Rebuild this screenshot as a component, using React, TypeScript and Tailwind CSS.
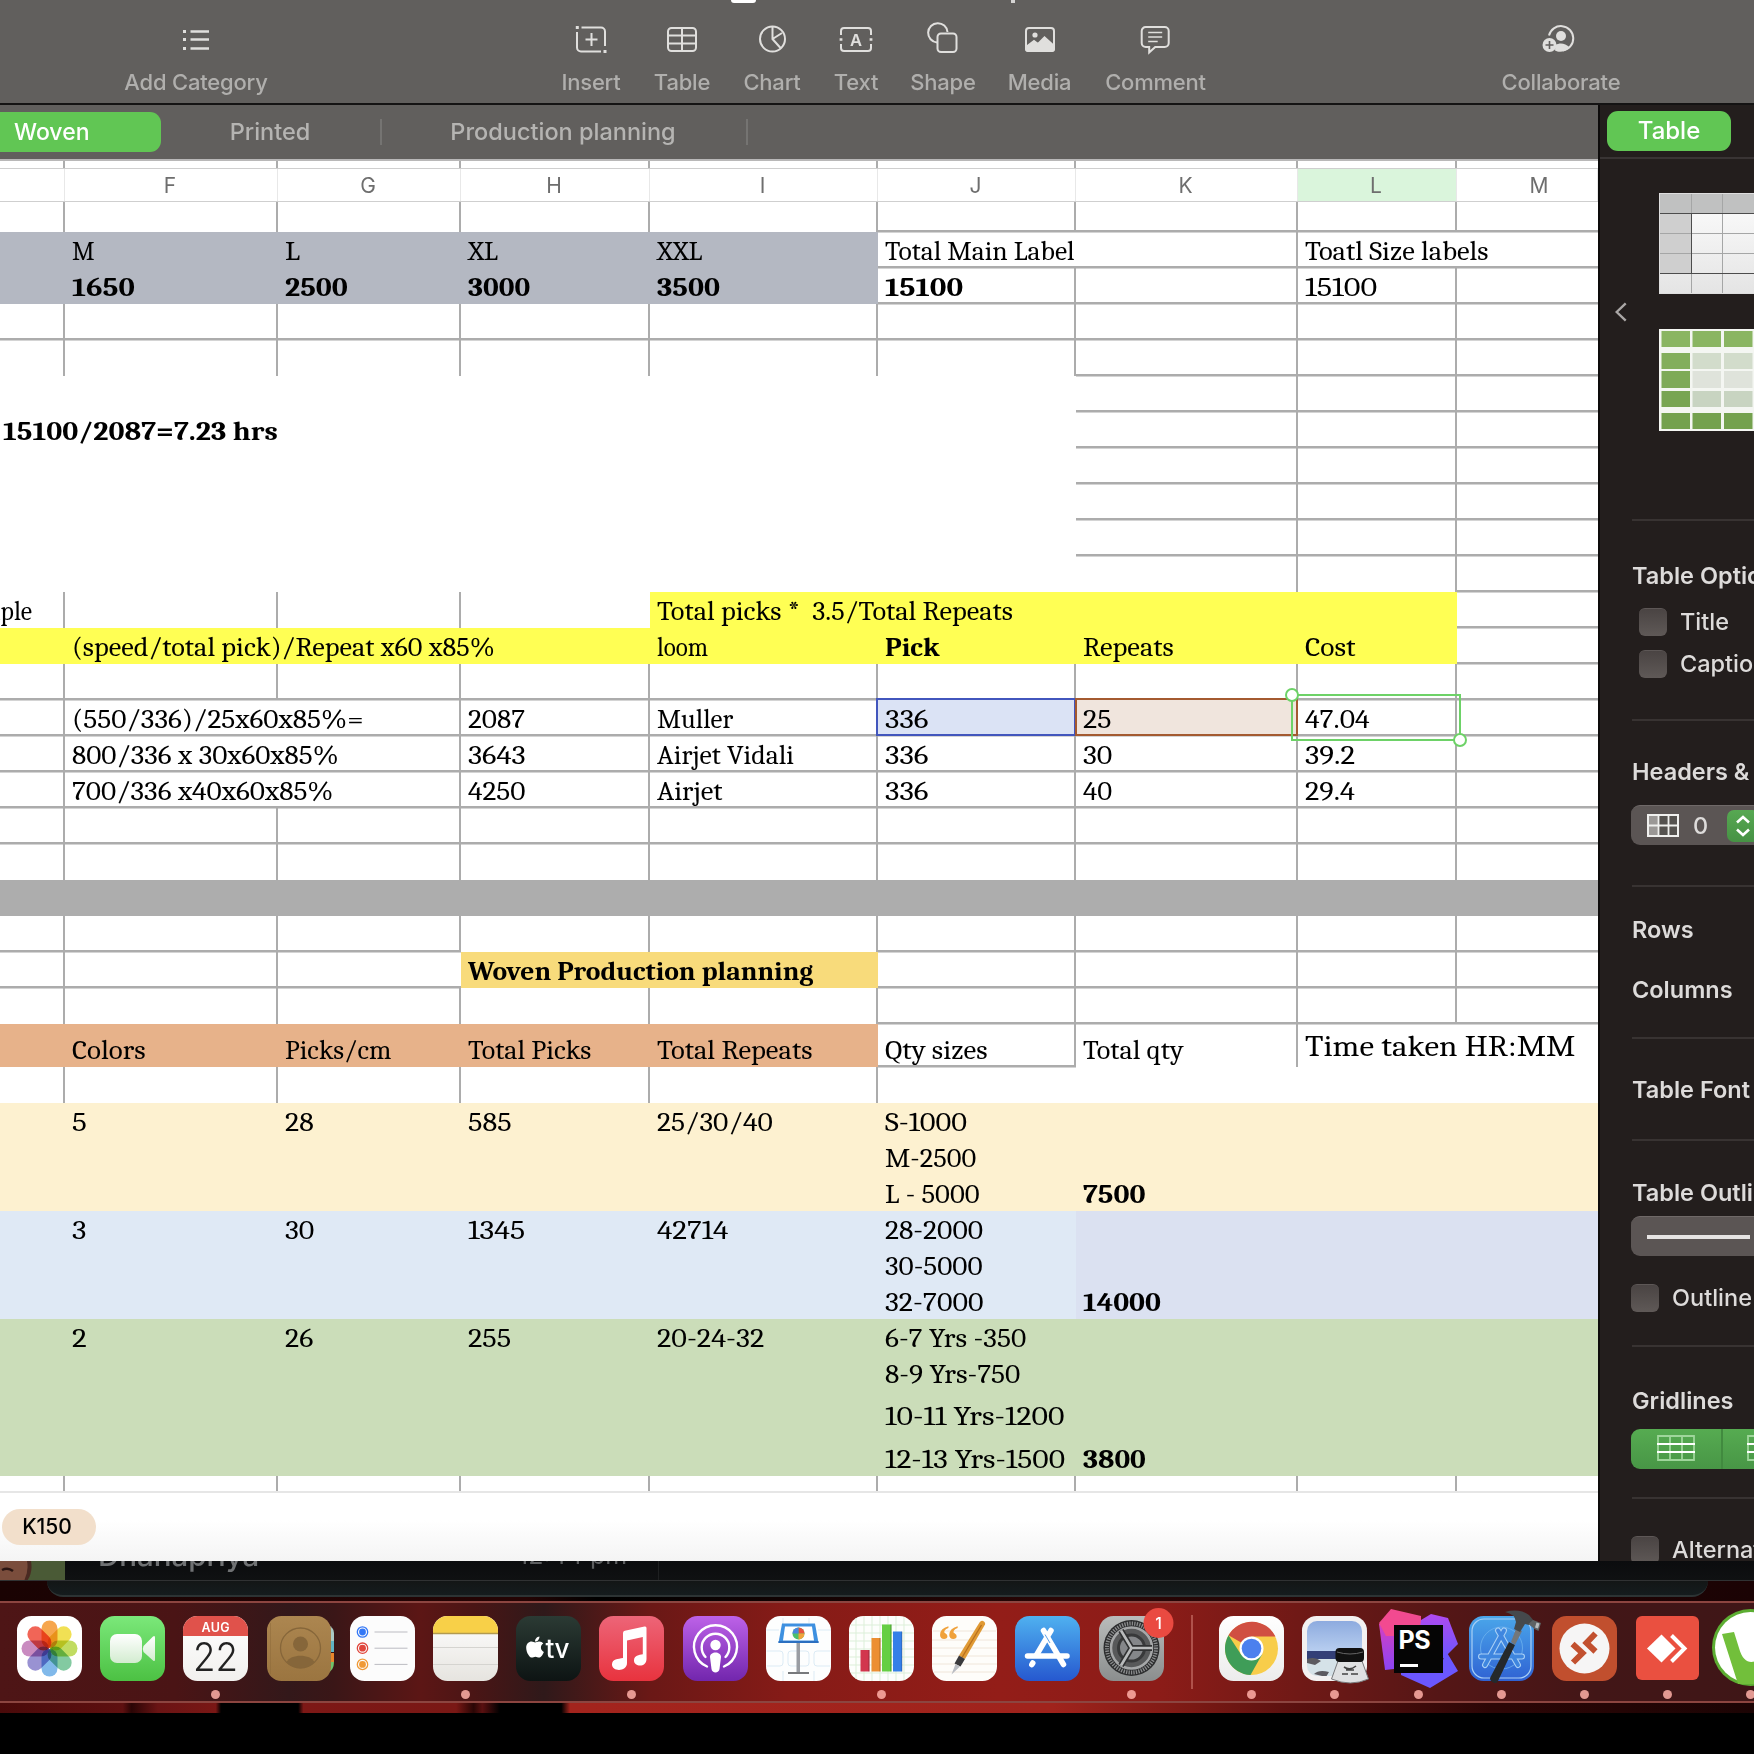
import React, { useLayoutEffect, useRef } from "react";
import { FaApple } from "react-icons/fa";

const COLS = ["E", "F", "G", "H", "I", "J", "K", "L", "M"] as const;
const WIDTH: Record<string, string> = {
  E: "w-[65px]",
  F: "w-[213px]",
  G: "w-[183px]",
  H: "w-[189px]",
  I: "w-[228px]",
  J: "w-[198px]",
  K: "w-[222px]",
  L: "w-[159px]",
  M: "w-[141px]",
};
const FILL: Record<string, string> = {
  ".": "",
  s: "bg-[#b4b8c2]",
  y: "bg-[#ffff54]",
  g: "bg-[#adadad]",
  w: "bg-[#f8db7b]",
  o: "bg-[#e7b28a]",
  c: "bg-[#fdf1d0]",
  b: "bg-[#dfe9f5]",
  p: "bg-[#dbe1f1]",
  n: "bg-[#cbddb9]",
  u: "bg-[#dbe3f5]",
  r: "bg-[#f0e5dd]",
};

type Row = {
  h: string;
  fill?: string;
  v?: string;
  b?: string;
  t?: Record<string, string>;
  bold?: string;
};

const ALL = "111111110";
const NONE = "000000000";
const FULL = "111111111";
const MERGED: Row = { h: "h-9", v: "000000110", b: "000000111" };

const ROWS: Row[] = [
  { h: "h-[30px]", v: ALL, b: "000001111" },
  { h: "h-9", fill: "sssss....", v: "000000100", b: "000001111", t: { F: "M", G: "L", H: "XL", I: "XXL", J: "Total Main Label", L: "Toatl Size labels" } },
  { h: "h-9", fill: "sssss....", v: "000001110", b: "000001111", t: { F: "1650", G: "2500", H: "3000", I: "3500", J: "15100", L: "15100" }, bold: "FGHIJ" },
  { h: "h-9", v: ALL, b: FULL },
  { h: "h-9", v: ALL, b: "000000111" },
  MERGED,
  { ...MERGED, t: { E: "15100/2087=7.23 hrs" }, bold: "E" },
  MERGED,
  MERGED,
  MERGED,
  { h: "h-9", v: "000000110", b: "000000001" },
  { h: "h-9", fill: "....yyyy.", v: "111000000", b: "000000001", t: { E: "Sample", I: "Total picks *  3.5/Total Repeats" } },
  { h: "h-9", fill: "yyyyyyyy.", v: NONE, b: "000000001", t: { F: "(speed/total pick)/Repeat x60 x85%", I: "loom", J: "Pick", K: "Repeats", L: "Cost" }, bold: "J" },
  { h: "h-9", v: ALL, b: FULL },
  { h: "h-9", fill: ".....ur..", v: "101111110", b: FULL, t: { F: "(550/336)/25x60x85%=", H: "2087", I: "Muller", J: "336", K: "25", L: "47.04" } },
  { h: "h-9", v: "101111110", b: FULL, t: { F: "800/336 x 30x60x85%", H: "3643", I: "Airjet Vidali", J: "336", K: "30", L: "39.2" } },
  { h: "h-9", v: "101111110", b: FULL, t: { F: "700/336 x40x60x85%", H: "4250", I: "Airjet", J: "336", K: "40", L: "29.4" } },
  { h: "h-9", v: ALL, b: FULL },
  { h: "h-9", v: ALL, b: NONE },
  { h: "h-9", fill: "ggggggggg", v: NONE, b: NONE },
  { h: "h-9", v: ALL, b: "111001111" },
  { h: "h-9", fill: "...ww....", v: "110001110", b: "111001111", t: { H: "Woven Production planning" }, bold: "H" },
  { h: "h-9", v: ALL, b: "000001111" },
  { h: "h-[43px]", fill: "ooooo....", v: "000001100", b: "000001000", t: { F: "Colors", G: "Picks/cm", H: "Total Picks", I: "Total Repeats", J: "Qty sizes", K: "Total qty", L: "Time taken HR:MM" } },
  { h: "h-9", v: "111110000", b: NONE },
  { h: "h-9", fill: "ccccccccc", t: { F: "5", G: "28", H: "585", I: "25/30/40", J: "S-1000" } },
  { h: "h-9", fill: "ccccccccc", t: { J: "M-2500" } },
  { h: "h-9", fill: "ccccccccc", t: { J: "L - 5000", K: "7500" }, bold: "K" },
  { h: "h-9", fill: "bbbbbbppp", t: { F: "3", G: "30", H: "1345", I: "42714", J: "28-2000" } },
  { h: "h-9", fill: "bbbbbbppp", t: { J: "30-5000" } },
  { h: "h-9", fill: "bbbbbbppp", t: { J: "32-7000", K: "14000" }, bold: "K" },
  { h: "h-9", fill: "nnnnnnnnn", t: { F: "2", G: "26", H: "255", I: "20-24-32", J: "6-7 Yrs -350" } },
  { h: "h-9", fill: "nnnnnnnnn", t: { J: "8-9 Yrs-750" } },
  { h: "h-[42px]", fill: "nnnnnnnnn", t: { J: "10-11 Yrs-1200" } },
  { h: "h-[43px]", fill: "nnnnnnnnn", t: { J: "12-13 Yrs-1500", K: "3800" }, bold: "K" },
  { h: "h-[15px]", v: ALL, b: NONE },
];

// Advance widths in px of the sheet's longer labels; plain numbers use a fixed digit advance.
const TEXT_WIDTH: Record<string, number> = {
  M: 22.5,
  L: 15,
  XL: 30,
  XXL: 45.5,
  "Total Main Label": 190,
  "Toatl Size labels": 183,
  "15100/2087=7.23 hrs": 275,
  Sample: 76,
  "Total picks *  3.5/Total Repeats": 356,
  loom: 51,
  Pick: 54,
  Repeats: 91,
  Cost: 51,
  "(speed/total pick)/Repeat x60 x85%": 423,
  "(550/336)/25x60x85%=": 292,
  "800/336 x 30x60x85%": 267,
  "700/336 x40x60x85%": 261,
  Muller: 76,
  "Airjet Vidali": 137,
  Airjet: 66,
  "47.04": 65,
  "39.2": 50,
  "29.4": 50,
  "Woven Production planning": 345,
  Colors: 73.5,
  "Picks/cm": 107,
  "Total Picks": 123,
  "Total Repeats": 155,
  "Qty sizes": 102,
  "Total qty": 101,
  "Time taken HR:MM": 270,
  "25/30/40": 116,
  "S-1000": 82,
  "M-2500": 91,
  "L - 5000": 95,
  "28-2000": 98,
  "30-5000": 98,
  "32-7000": 98,
  "20-24-32": 107,
  "6-7 Yrs -350": 141,
  "8-9 Yrs-750": 135,
  "10-11 Yrs-1200": 180,
  "12-13 Yrs-1500": 180,
};

function CellText({ text, className, bold }: { text: string; className: string; bold: boolean }) {
  const ref = useRef<HTMLSpanElement>(null);
  useLayoutEffect(() => {
    const el = ref.current;
    if (!el) return;
    const target = TEXT_WIDTH[text] ?? text.length * (bold ? 15.6 : 14.4);
    const natural = el.offsetWidth;
    if (natural > 0) el.style.transform = `scaleX(${target / natural})`;
  }, [text, bold]);
  return (
    <span ref={ref} className={`shrink-0 whitespace-pre ${text === "Sample" ? "origin-right" : "origin-left"} ${bold ? "font-bold" : ""} ${className}`}>
      {text}
    </span>
  );
}

function Cell({ row, col, i }: { row: Row; col: string; i: number }) {
  const text = row.t?.[col];
  const right = row.v?.[i] === "1";
  const bottom = row.b?.[i] === "1";
  const big = text === "Time taken HR:MM";
  return (
    <div
      className={`flex shrink-0 items-end border-[#acacac] ${WIDTH[col]} ${FILL[row.fill?.[i] ?? "."]} ${right ? "border-r-2" : ""} ${bottom ? "border-b-2 shadow-[0_1px_0_#d4d4d4]" : ""} ${col === "E" ? (text === "Sample" ? "pr-[31px] justify-end" : "pl-[3px]") : "pl-[7px]"}`}
    >
      {text && (
        <CellText
          text={text}
          bold={!!row.bold?.includes(col)}
          className={`relative z-10 ${big ? "text-[30px] leading-[41px]" : "text-[26px] leading-[31px]"} ${bottom ? "-mb-[2px]" : ""}`}
        />
      )}
    </div>
  );
}

function Sheet() {
  return (
    <div className="relative flex h-[1400px] flex-col overflow-hidden bg-white text-black [font-family:Cambria,Caladea,'Liberation_Serif',serif]">
      <div className="flex h-[7px] shrink-0">
        {COLS.map((c, i) => (
          <div key={c} className={`shrink-0 ${WIDTH[c]} ${i < 8 ? "border-r-2 border-[#acacac]" : ""}`} />
        ))}
      </div>
      <div className="flex h-[34px] shrink-0 border-y border-[#cfcfcf] text-[21px] text-[#6e6e6e] [font-family:Inter,sans-serif]">
        {COLS.map((c) => (
          <div
            key={c}
            className={`flex shrink-0 items-center justify-center border-r border-[#e8e8e8] pr-[2px] pt-[2px] ${WIDTH[c]} ${c === "L" ? "bg-[#daf5dc]" : ""} ${c === "M" ? "pl-[26px]" : ""}`}
          >
            {c === "E" ? "" : c}
          </div>
        ))}
      </div>
      {ROWS.map((row, r) => (
        <div key={r} className={`flex shrink-0 ${row.h}`}>
          {COLS.map((c, i) => (
            <Cell key={c} row={row} col={c} i={i} />
          ))}
        </div>
      ))}
      <div className="flex-1 border-t-2 border-[#e6e6e6] bg-linear-to-b from-white from-40% to-[#f4f4f4] pt-[16px]">
        <div className="ml-[2px] flex h-9 w-[94px] items-center justify-center rounded-full bg-[#f2dfcb] pr-1 text-[21px] font-medium [font-family:Inter,sans-serif]">
          K150
        </div>
      </div>
      <div className="absolute left-[876px] top-[537px] h-[38px] w-[200px] border-2 border-[#4256bd]" />
      <div className="absolute left-[1075px] top-[537px] h-[38px] w-[223px] border-2 border-[#a45a30]" />
      <div className="absolute left-[1291px] top-[533px] h-[47px] w-[170px] border-2 border-[#6dd267]">
        <span className="absolute -left-[8px] -top-[8px] size-[14px] rounded-full border-2 border-[#6dd267] bg-white" />
        <span className="absolute -bottom-[8px] -right-[8px] size-[14px] rounded-full border-2 border-[#6dd267] bg-white" />
      </div>
    </div>
  );
}

const ink = "#e0dfdd";
const TOOLS: { label: string; box: string; icon: React.ReactNode }[] = [
  {
    label: "Add Category",
    box: "ml-[124px] w-[144px]",
    icon: (
      <g strokeWidth="2.400">
        <path d="M9.500 8.500h18.500M9.500 16.500h18.500M9.500 25.500h18.500" />
        <path d="M2 8.500h3M2 16.500h3M2 25.500h3" strokeWidth="3.200" />
      </g>
    ),
  },
  {
    label: "Insert",
    box: "ml-[293px] w-[60px]",
    icon: (
      <g>
        <path d="M5.500 4.500H25a4 4 0 0 1 4 4V23M25 28.500H5a4 4 0 0 1-4-4V9" />
        <path d="M15.500 10v13M9.500 16.500h12" />
        <path d="M-.2 4.500h3M27.500 28.500h3" strokeWidth="2.800" />
      </g>
    ),
  },
  {
    label: "Table",
    box: "ml-[34px] w-[54px]",
    icon: (
      <g>
        <rect x="1" y="5" width="28" height="23" rx="3.500" />
        <path d="M1 12.500h28M1 20.500h28M15 5v23" />
      </g>
    ),
  },
  {
    label: "Chart",
    box: "ml-[34px] w-[58px]",
    icon: (
      <g>
        <circle cx="15.500" cy="16" r="12.500" />
        <path d="M15.500 3.500V16l8.500 9.500M15.500 16l9.500-6" />
      </g>
    ),
  },
  {
    label: "Text",
    box: "ml-[34px] w-[42px]",
    icon: (
      <g>
        <path d="M0 12V8a3 3 0 0 1 3-3h24a3 3 0 0 1 3 3v4M0 21v4a3 3 0 0 0 3 3h24a3 3 0 0 0 3-3v-4" />
        <path d="M0 15.200v2.600M30 15.200v2.600" strokeWidth="2.800" />
        <text x="15" y="22.500" textAnchor="middle" fontSize="16.500" fontWeight="600" fontFamily="Inter" fill={ink} stroke="none">
          A
        </text>
      </g>
    ),
  },
  {
    label: "Shape",
    box: "ml-[34px] w-[64px]",
    icon: (
      <g>
        <path d="M9 19.500A9.700 9.700 0 1 1 19.500 9" />
        <rect x="9.500" y="10.500" width="19" height="18.500" rx="3.500" />
      </g>
    ),
  },
  {
    label: "Media",
    box: "ml-[33px] w-[63px]",
    icon: (
      <g>
        <rect x="1" y="5" width="28" height="23" rx="3" />
        <path d="M1 24l8-6 4 3 6.500-6.500L29 23v3a2 2 0 0 1-2 2H3a2 2 0 0 1-2-2z" fill={ink} />
        <circle cx="10" cy="12" r="2.600" fill={ink} stroke="none" />
      </g>
    ),
  },
  {
    label: "Comment",
    box: "ml-[34px] w-[101px]",
    icon: (
      <g transform="translate(-.8 0)">
        <path d="M5.500 4h19a4 4 0 0 1 4 4v12a4 4 0 0 1-4 4H15l-6 5.500V24H5.500a4 4 0 0 1-4-4V8a4 4 0 0 1 4-4z" />
        <path d="M8 9.500h14M8 14h14M8 18.500h9.500" strokeWidth="1.700" />
      </g>
    ),
  },
  {
    label: "Collaborate",
    box: "ml-[295px] w-[120px]",
    icon: (
      <g transform="translate(-2 0)">
        <path d="M5 12.500A12.300 12.300 0 1 1 19 27.500" />
        <circle cx="17" cy="13" r="5" fill={ink} stroke="none" />
        <path d="M11 27.500c3.500 2 10 2 14.500-3-4-4.500-10-5-14-2.500z" fill={ink} stroke="none" />
        <circle cx="5.500" cy="22" r="7" fill={ink} stroke="none" />
        <path d="M5.500 18v8M1.500 22h8" stroke="#615f5d" strokeWidth="1.600" />
      </g>
    ),
  },
];

function Toolbar() {
  return (
    <div className="flex h-[105px] flex-col overflow-hidden border-b-2 border-[#141313] bg-[#615f5d]">
      <div className="flex h-[3px] shrink-0">
        <div className="ml-[731px] w-[25px] rounded-b-sm bg-white" />
        <div className="ml-[255px] w-[4px] bg-[#d5d4d3]" />
      </div>
      <div className="flex pt-[20px]">
        {TOOLS.map((t) => (
          <div key={t.label} className={`flex shrink-0 flex-col items-center ${t.box}`}>
            <svg viewBox="0 0 30 33" className="h-[33px] w-[30px] overflow-visible" fill="none" stroke={ink} strokeWidth="2">
              {t.icon}
            </svg>
            <span className="mt-[12px] whitespace-nowrap text-[22px] font-medium leading-7 tracking-[-0.2px] text-[#b0afad]">{t.label}</span>
          </div>
        ))}
      </div>
    </div>
  );
}

function SheetTabs() {
  return (
    <div className="flex h-[56px] items-center border-b-2 border-[#b9b8b8] bg-[#615f5d] text-[23.500px] font-medium text-[#b5b4b2]">
      <div className="flex h-10 w-[161px] items-center rounded-r-[11px] bg-[#61c654] pl-[14px] text-[23px] text-white">Woven</div>
      <div className="flex w-[219px] justify-center pr-[1px]">
        <span className="whitespace-nowrap">Printed</span>
      </div>
      <div className="h-[26px] w-[2px] bg-[#757472]" />
      <div className="flex w-[364px] justify-center pr-[2px]">
        <span className="whitespace-nowrap">Production planning</span>
      </div>
      <div className="h-[26px] w-[2px] bg-[#757472]" />
    </div>
  );
}

function Check() {
  return <span className="h-[28px] w-[28px] shrink-0 rounded-[6px] border-t border-[#5d5756] bg-linear-to-b from-[#4a4443] to-[#5f5957]" />;
}

function GridGlyph() {
  return (
    <svg viewBox="0 0 38 26" className="h-[26px] w-[38px] shrink-0" fill="none">
      <path d="M1 1h36v24H1zM13 1v24M25 1v24" stroke="#9fd69b" strokeWidth="1.800" />
      <path d="M0 9h38M0 17h38" stroke="#fff" strokeWidth="2.200" />
    </svg>
  );
}

function ThumbPlain() {
  return (
    <svg viewBox="0 0 95 101" className="h-[101px] w-[95px]">
      <defs>
        <linearGradient id="tp" x1="0" y1="0" x2="0" y2="1">
          <stop offset="0" stopColor="#fdfdfd" />
          <stop offset="1" stopColor="#e4e4e4" />
        </linearGradient>
      </defs>
      <rect width="95" height="101" fill="url(#tp)" />
      <rect width="95" height="20.500" fill="#c0c1c1" />
      <rect y="20.500" width="32" height="60" fill="#cfcfcf" />
      <path d="M32.500 0v101M63.500 0v101M0 40.500h95M0 60.500h95" stroke="#a5a6a6" fill="none" />
      <path d="M0 20.500h95M0 80.500h95M32.500 20.500v60" stroke="#4c4c4c" fill="none" />
      <path d="M.5 0v101M0 .5h95M0 100.500h95" stroke="#dedede" fill="none" />
    </svg>
  );
}

function ThumbGreen() {
  const ys = [2, 24, 42, 62, 84];
  const hs = [16, 16, 17, 16, 16];
  const greens = ["#8ab562", "#83ae5c", "#7eaa57", "#78a552", "#74a14e"];
  const grays = ["", "#d2dccb", "#dfe3db", "#c8d4c1", ""];
  return (
    <svg viewBox="0 0 95 102" className="h-[102px] w-[95px]">
      <rect width="95" height="102" fill="#f4f6f2" />
      {ys.map((y, r) =>
        [2.5, 33.500, 65].map((x, c) => (
          <rect key={`${r}${c}`} x={x} y={y} width="28.500" height={hs[r]} fill={c > 0 && grays[r] ? grays[r] : greens[r]} />
        ))
      )}
    </svg>
  );
}

const RULE = "ml-[32px] h-[2px] shrink-0 bg-[#383332]";
const HEAD = "ml-[32px] shrink-0 whitespace-nowrap text-[23.500px] font-semibold leading-7 text-[#dddbda]";

function Inspector() {
  return (
    <div className="flex h-[1456px] w-[156px] shrink-0 flex-col overflow-hidden border-l-2 border-[#0d0b0b] bg-[#231e1d] text-[23.500px] font-medium text-[#dddbda]">
      <div className="flex h-[54px] shrink-0 items-center border-b-2 border-[#393434] pl-[7px]">
        <div className="flex h-10 w-[124px] items-center justify-center rounded-[11px] bg-[#61c654] text-[24px] text-white">Table</div>
      </div>
      <div className="flex h-[360px] shrink-0 pt-[34px]">
        <svg viewBox="0 0 14 22" className="ml-[15px] mt-[108px] h-[22px] w-[14px]" fill="none" stroke="#aaa7a6" strokeWidth="2.800">
          <path d="M12.500 1L2 11l10.500 10" />
        </svg>
        <div className="ml-[32px] flex flex-col gap-[35px]">
          <ThumbPlain />
          <ThumbGreen />
        </div>
      </div>
      <div className={RULE} />
      <div className={`${HEAD} mt-[41px]`}>Table Options</div>
      <div className="ml-[39px] mt-[18px] flex shrink-0 items-center gap-[13px] leading-7">
        <Check />
        Title
      </div>
      <div className="ml-[39px] mt-[14px] flex shrink-0 items-center gap-[13px] leading-7">
        <Check />
        Caption
      </div>
      <div className={`${RULE} mt-[41px]`} />
      <div className={`${HEAD} mt-[37px]`}>Headers &amp; Footer</div>
      <div className="ml-[31px] mt-[19px] flex h-10 w-[140px] shrink-0 items-center rounded-[9px] border-t border-[#6f6968] bg-[#5b5554] pl-4">
        <svg viewBox="0 0 32 23" className="h-[23px] w-[32px] shrink-0">
          <rect x="1" y="1" width="30" height="21" fill="#55524f" stroke="#f0f0ee" strokeWidth="2" />
          <rect x="2" y="2" width="9" height="19" fill="#9b9896" />
          <path d="M11.500 1v21M21.500 1v21M1 11.500h30" stroke="#f0f0ee" strokeWidth="1.800" />
        </svg>
        <span className="ml-[14px] w-[34px]">0</span>
        <div className="flex h-8 w-[32px] shrink-0 items-center justify-center rounded-[7px] bg-linear-to-b from-[#57a852] to-[#469244]">
          <svg viewBox="0 0 16 22" className="h-[22px] w-[16px]" fill="none" stroke="#fff" strokeWidth="2.600">
            <path d="M2 7.500L8 2l6 5.500M2 14.500L8 20l6-5.500" />
          </svg>
        </div>
      </div>
      <div className={`${RULE} mt-[40px]`} />
      <div className={`${HEAD} mt-[29px]`}>Rows</div>
      <div className={`${HEAD} mt-[32px]`}>Columns</div>
      <div className={`${RULE} mt-[33px]`} />
      <div className={`${HEAD} mt-[37px]`}>Table Font Size</div>
      <div className={`${RULE} mt-[35px]`} />
      <div className={`${HEAD} mt-[38px]`}>Table Outline</div>
      <div className="ml-[31px] mt-[9px] flex h-10 w-[140px] shrink-0 items-center rounded-[9px] border-t border-[#6f6968] bg-[#5b5554] pl-4">
        <span className="h-1 w-[103px] bg-[#e6e4e3]" />
      </div>
      <div className="ml-[31px] mt-[28px] flex shrink-0 items-center gap-[13px] leading-7">
        <Check />
        <span className="whitespace-nowrap">Outline table</span>
      </div>
      <div className={`${RULE} mt-[33px]`} />
      <div className={`${HEAD} mt-[40px]`}>Gridlines</div>
      <div className="ml-[31px] mt-[14px] flex h-10 w-[180px] shrink-0 overflow-hidden rounded-[9px] bg-linear-to-b from-[#56ab51] to-[#489646]">
        <div className="flex w-[92px] items-start justify-center border-r-2 border-[#418a3f] pt-[6px]">
          <GridGlyph />
        </div>
        <div className="flex flex-1 pl-[24px] pt-[6px]">
          <GridGlyph />
        </div>
      </div>
      <div className={`${RULE} mt-[28px]`} />
      <div className="ml-[31px] mt-[37px] flex shrink-0 items-center gap-[13px] leading-7">
        <Check />
        <span className="whitespace-nowrap">Alternating Row Color</span>
      </div>
    </div>
  );
}

function Grad({ id, a, b }: { id: string; a: string; b: string }) {
  return (
    <defs>
      <linearGradient id={id} x1="0" y1="0" x2="0" y2="1">
        <stop offset="0" stopColor={a} />
        <stop offset="1" stopColor={b} />
      </linearGradient>
    </defs>
  );
}
const tile = (fill: string) => <rect width="65" height="65" rx="14.500" fill={fill} />;

const PETALS = ["#f59a35", "#f0dc3c", "#b9d84c", "#72c394", "#6fb0e8", "#8b83cc", "#c27bb8", "#f0503f"];

const Photos = (
  <>
    {tile("#fff")}
    <g style={{ mixBlendMode: "multiply" }}>
      {PETALS.map((c, i) => (
        <rect key={c} x="24.500" y="4.500" width="16" height="27.500" rx="8" fill={c} opacity=".88" transform={`rotate(${i * 45} 32.500 32.500)`} style={{ mixBlendMode: "multiply" }} />
      ))}
    </g>
  </>
);
const Facetime = (
  <>
    <Grad id="ft" a="#7be87a" b="#4cc143" />
    <Grad id="ftw" a="#ffffff" b="#d3ecd0" />
    {tile("url(#ft)")}
    <rect x="10" y="18" width="32" height="29" rx="7" fill="url(#ftw)" />
    <path d="M43.500 30L53 20.500q2-1.500 2 1v22q0 2.500-2 1L43.500 36q-1.500-3 0-6z" fill="url(#ftw)" />
  </>
);
const Calendar = (
  <>
    <Grad id="cal" a="#ffffff" b="#f1f0ee" />
    {tile("url(#cal)")}
    <path d="M0 20V14.500A14.500 14.500 0 0 1 14.500 0h36A14.500 14.500 0 0 1 65 14.500V20z" fill="#e0524b" />
    <text x="32.500" y="15.500" textAnchor="middle" fontFamily="Inter" fontWeight="600" fontSize="12.500" textLength="28" fill="#fff">AUG</text>
    <text x="32.500" y="54.500" textAnchor="middle" fontFamily="Inter" fontWeight="300" fontSize="39" textLength="45" lengthAdjust="spacingAndGlyphs" fill="#222">22</text>
  </>
);
const Contacts = (
  <>
    <path d="M60 9q7 2 7 8v8h-7z" fill="#a9c9c4" />
    <path d="M60 25h7v11h-7z" fill="#5fb3c4" />
    <path d="M60 37h7v9h-7z" fill="#e8862c" />
    <path d="M60 46h7q0 9-7 11z" fill="#6fc36b" />
    <Grad id="con" a="#ac8650" b="#9b7540" />
    <rect width="64" height="65" rx="14.500" fill="url(#con)" />
    <path d="M3.500 7v51" stroke="#8d6a3a" opacity=".5" />
    <circle cx="33.500" cy="32" r="20" fill="none" stroke="#86663a" strokeWidth="1.300" />
    <circle cx="33.500" cy="28" r="7.500" fill="#86663a" />
    <path d="M19.500 46c4-8.500 24-8.500 28 0-7 8-21 8-28 0z" fill="#86663a" />
  </>
);
const Reminders = (
  <>
    {tile("#fcfcfc")}
    {["#3478f6", "#e0463c", "#f09a37"].map((c, i) => (
      <g key={c}>
        <circle cx="12.500" cy={16 + i * 16.200} r="5.200" fill="none" stroke={c} strokeWidth="1.300" />
        <circle cx="12.500" cy={16 + i * 16.200} r="3.400" fill={c} />
        <path d={`M24.500 ${16 + i * 16.200}h33`} stroke="#bcbcc2" />
      </g>
    ))}
  </>
);
const Notes = (
  <>
    <Grad id="nt" a="#ffffff" b="#e6e4df" />
    {tile("url(#nt)")}
    <path d="M0 17v-2.500A14.500 14.500 0 0 1 14.500 0h36A14.500 14.500 0 0 1 65 14.500V17z" fill="#f8d048" />
    <path d="M0 17.500h65" stroke="#b39a4e" strokeWidth="1.500" />
    <path d="M0 31.500h65M0 48.500h65" stroke="#d5d4d0" />
  </>
);
const Tv = (
  <>
    <Grad id="tv" a="#2b3a34" b="#0d1413" />
    {tile("url(#tv)")}
    <FaApple x={7} y={19} size={24} color="#fff" />
    <text x="29.500" y="42" fontFamily="Inter" fontSize="26" fontWeight="500" fill="#fff" letterSpacing="-.5">tv</text>
  </>
);
const Music = (
  <>
    <Grad id="mu" a="#ed6578" b="#e8333e" />
    {tile("url(#mu)")}
    <path d="M24 17q0-1.800 1.800-2.200L45.500 10.500q2-.4 2 1.500V43c0 9-12.500 8-12.500 1.500 0-5 5-5.500 8.800-6.200V21L28 24.400V47c0 9-15 9-15 1.500 0-5.500 6-5.500 11-6.500z" fill="#fff" />
  </>
);
const Podcasts = (
  <>
    <Grad id="po" a="#bd62e8" b="#7226ad" />
    {tile("url(#po)")}
    <g fill="none" stroke="#fff" strokeWidth="2.400" strokeLinecap="round">
      <path d="M24 50.500A21.500 21.500 0 1 1 41 50.500" />
      <path d="M22.500 41A13.800 13.800 0 1 1 42.500 41" />
    </g>
    <circle cx="32.500" cy="29" r="5.200" fill="#fff" />
    <path d="M27 41c0-6 11-6 11 0l-1.500 12c-.5 4.500-7.500 4.500-8 0z" fill="#fff" />
  </>
);
const Keynote = (
  <>
    {tile("#fdfefe")}
    <g fill="none" stroke="#dcebf5">
      <path d="M.5 35h13.500a3 3 0 0 1 3 3v9a3 3 0 0 1-3 3H.5" />
      <rect x="22" y="35" width="21" height="15" rx="3" />
      <path d="M64.500 35H51a3 3 0 0 0-3 3v9a3 3 0 0 0 3 3h13.500" />
      <path d="M17 2v10M43 2v5M0 14h13M52 14h13M17 55v10M48 55v10" />
    </g>
    <rect x="30.500" y="26" width="3.500" height="31" fill="#9a9da3" />
    <path d="M22 56h21v2H22z" fill="#77797c" />
    <path d="M16 7.500h33l3.500 19.500H12.500z" fill="#3e90e0" />
    <path d="M19 10.500h27l2 14H17z" fill="#fff" />
    <circle cx="32.500" cy="17.500" r="6" fill="#4dbf6c" />
    <path d="M32.500 17.500v-6a6 6 0 0 1 6 6z" fill="#e8523f" />
    <path d="M32.500 17.500h6a6 6 0 0 1-6 6z" fill="#f2a33a" />
    <path d="M32.500 17.500v-6a6 6 0 0 0-6 6z" fill="#4a86e0" />
    <path d="M12.500 25h40v2h-40z" fill="#2b6fc0" />
  </>
);
const Numbers = (
  <>
    {tile("#fdfefc")}
    <path d="M7 2v61M15 0v65M23 0v65M31 0v65M39 0v65M47 0v65M55 1v63M2 9h61M0 17h65M0 25h65M0 33h65M0 41h65M0 49h65M2 57h61" stroke="#dcefd9" />
    <rect x="11.500" y="34" width="9" height="21.500" fill="#d2364e" />
    <rect x="22.500" y="22" width="9" height="33.500" fill="#ec8f32" />
    <rect x="33" y="8.500" width="9.500" height="47" fill="#65cf43" />
    <rect x="44" y="15.500" width="9" height="40" fill="#347fe8" />
    <path d="M20 34v21.500M31 22v33.500M42 8.500v47M53 15.500v40" stroke="#000" opacity=".25" />
  </>
);
const Pages = (
  <>
    {tile("#fefdfa")}
    <path d="M1 15h63M0 24h65M0 32h65M0 40h65M0 48h65M2 56h61" stroke="#f0e6da" />
    <text x="6" y="38" fontFamily="Liberation Serif" fontWeight="700" fontSize="42" fill="#f0a13a">“</text>
    <path d="M47.500 6.500q2-3 5-.5 1 1 .5 2.500L33 43l-6-3.500z" fill="#e09a35" />
    <path d="M49.500 9L30 41.500" stroke="#b8701d" strokeWidth="1.300" />
    <path d="M27 39.500l6 3.500-4.500 7.500-6-3z" fill="#3a3a3d" />
    <path d="M23.500 48l4.500 2.500-8.500 8z" fill="#b9bcc2" />
  </>
);
const AppStore = (
  <>
    <Grad id="as" a="#4fb1f0" b="#2658cf" />
    {tile("url(#as)")}
    <g stroke="#fff" strokeWidth="5.500" strokeLinecap="round">
      <path d="M28.500 14.500L48.500 48.500M36 14.500L21.500 39" />
      <path d="M12.500 40H52M17.800 47l-1 1.700" />
    </g>
    <path d="M30 18.500l5 8.500" stroke="#3487e0" strokeWidth=".8" />
  </>
);
const Settings = (
  <>
    <Grad id="se" a="#b9bcbb" b="#8b8e8e" />
    {tile("url(#se)")}
    <circle cx="32.500" cy="32" r="28" fill="#2c2d2e" />
    <circle cx="32.500" cy="32" r="24.500" fill="none" stroke="#8b8d8e" strokeWidth="4" strokeDasharray="1.300 1.200" />
    <circle cx="32.500" cy="32" r="20.500" fill="#58595a" stroke="#a5a7a8" strokeWidth="2.500" />
    <circle cx="32.500" cy="32" r="13" fill="#85878a" stroke="#38393a" strokeWidth="3" />
    <path d="M32.500 32H53M32.500 32L22 14.500M32.500 32L22 49.500" stroke="#303132" strokeWidth="6" />
    <path d="M32.500 32H53M32.500 32L22 14.500M32.500 32L22 49.500" stroke="#b9bbbc" strokeWidth="2.600" />
    <circle cx="59.500" cy="7" r="15" fill="#ea4a41" />
    <text x="59.500" y="12.500" textAnchor="middle" fontFamily="Inter" fontSize="16" fontWeight="500" fill="#fff">1</text>
  </>
);
const Chrome = (
  <>
    <Grad id="ch" a="#ffffff" b="#ececec" />
    {tile("url(#ch)")}
    <circle cx="32.500" cy="32.500" r="26.500" fill="#f8cd4a" />
    <path d="M32.500 32.500L9.500 19.300A26.500 26.500 0 0 1 56.500 20.500H32.500z" fill="#d04f42" />
    <path d="M9.500 19.300A26.500 26.500 0 0 0 31.500 59L43 38.500 22 38.500z" fill="#3f9d58" />
    <circle cx="32.500" cy="32.500" r="12" fill="#fff" />
    <circle cx="32.500" cy="32.500" r="9.800" fill="#4c80ee" />
  </>
);
const Preview = (
  <>
    {tile("#f3f1f1")}
    <clipPath id="pv"><rect x="5" y="5" width="55" height="55" rx="10" /></clipPath>
    <Grad id="sky" a="#86a5dc" b="#b9cff0" />
    <g clipPath="url(#pv)">
      <rect width="65" height="36" fill="url(#sky)" />
      <rect y="35" width="65" height="9" fill="#333f77" />
      <rect y="43" width="65" height="22" fill="#d5e2e8" />
      <path d="M5 43q8-3 14 2l-6 4-8-2zM12 58q5-5 15-2l-3 5z" fill="#5c5a60" />
    </g>
    <path d="M36 45h24l6.500 18q-18 8-37 0z" fill="#dfe1e2" stroke="#77797b" />
    <path d="M42 51q6 4 12-1M40 58h6m3 0h7M44 54h8" stroke="#444" strokeWidth="1.600" fill="none" />
    <rect x="33.500" y="32" width="28.500" height="14" rx="4" fill="#111" />
    <path d="M35 36q13 4 26 0" stroke="#666" fill="none" />
  </>
);
const PhpStorm = (
  <>
    <Grad id="ps1" a="#b04af0" b="#6b57ff" />
    <Grad id="ps2" a="#d63fc0" b="#8a45f5" />
    <path d="M-7 8L-1 54l18-2 5-45z" fill="url(#ps2)" />
    <path d="M-7 7L5-7l30 7v20H0z" fill="#f24a90" />
    <path d="M35 4l10-6 17 4 10 26-14 14H30z" fill="url(#ps1)" />
    <path d="M15 50h40l5-15 12 20-28 17-29-13z" fill="#6b57ff" />
    <rect x="8" y="9" width="49" height="48" fill="#050505" />
    <text x="12.500" y="33" fontFamily="Inter" fontWeight="700" fontSize="25" fill="#fff" letterSpacing="-.5">PS</text>
    <rect x="14" y="48" width="18" height="3" fill="#fff" />
  </>
);
const Xcode = (
  <>
    <Grad id="xc" a="#4aa6ea" b="#2f62d3" />
    {tile("url(#xc)")}
    <rect x="3" y="3" width="59" height="59" rx="12" fill="none" stroke="#a9d0f5" strokeWidth="1.200" />
    <circle cx="32.500" cy="32" r="21" fill="none" stroke="#6fb3ee" strokeWidth=".8" />
    <g stroke="#a9d0f5" strokeWidth="6" strokeLinecap="round">
      <path d="M29 14.500L49 49M35 14.500L16 49M12 40.500h41" />
    </g>
    <g stroke="#3f86df" strokeWidth="3.800" strokeLinecap="round">
      <path d="M29 14.500L49 49M35 14.500L16 49M12 40.500h41" />
    </g>
    <path d="M40 26l6 3L29 65q-1 3-4.500 1.500T21 62z" fill="#25292c" />
    <path d="M42 26l5-13 6 2-7 14z" fill="#73777a" />
    <path d="M36-4Q50-8 60-1l5 6-5 4-4-1-5 8-6-3 2-7Q46-2 36-4z" fill="#45494c" />
    <path d="M64 4l8 3-2.500 8-4-2-6-5z" fill="#5d6264" />
    <path d="M67.500 6.500l3 1-1.500 5-3-1z" fill="#b9bcbe" />
  </>
);
const Remote = (
  <>
    {tile("#c14f2e")}
    <circle cx="32.500" cy="32.500" r="25" fill="#f6f5f5" />
    <path d="M20.500 28l10 9-9.500 9.500M43.500 17.500L34.500 27l9 8.500" fill="none" stroke="#c2502f" strokeWidth="6" />
  </>
);
const AnyDesk = (
  <>
    <rect x="1" width="63" height="64" rx="6" fill="#ea5040" />
    <path d="M12 32.500L26.500 18.500l14 14-14 14z" fill="#fff" />
    <path d="M36.500 19.500l13 13-13 13" fill="none" stroke="#fff" strokeWidth="4" />
  </>
);
const Torrent = (
  <>
    <circle cx="32.500" cy="31.500" r="38.500" fill="#5cad32" />
    <circle cx="32.500" cy="31.500" r="35.500" fill="#fff" />
    <path d="M4 18l12-2 5 16c4 15 12 16 19 12v24H20z" fill="#72bf3b" />
  </>
);

type App = { name: string; art: React.ReactNode; on?: boolean };
const LEFT: App[] = [
  { name: "photos", art: Photos },
  { name: "facetime", art: Facetime },
  { name: "calendar", art: Calendar, on: true },
  { name: "contacts", art: Contacts },
  { name: "reminders", art: Reminders },
  { name: "notes", art: Notes, on: true },
  { name: "tv", art: Tv },
  { name: "music", art: Music, on: true },
  { name: "podcasts", art: Podcasts },
  { name: "keynote", art: Keynote },
  { name: "numbers", art: Numbers, on: true },
  { name: "pages", art: Pages },
  { name: "appstore", art: AppStore },
  { name: "settings", art: Settings, on: true },
];
const RIGHT: App[] = [
  { name: "chrome", art: Chrome, on: true },
  { name: "preview", art: Preview, on: true },
  { name: "phpstorm", art: PhpStorm, on: true },
  { name: "xcode", art: Xcode, on: true },
  { name: "remote", art: Remote, on: true },
  { name: "anydesk", art: AnyDesk, on: true },
  { name: "torrent", art: Torrent, on: true },
];

function DockApp({ app }: { app: App }) {
  return (
    <div className="flex w-[83.2px] shrink-0 flex-col items-center pt-[13px]">
      <svg viewBox="0 0 65 65" className="size-[65px] overflow-visible">
        {app.art}
      </svg>
      {app.on && <span className="mt-[9px] size-[9px] rounded-full bg-[#ffb0a8]/85" />}
    </div>
  );
}

function Dock() {
  return (
    <div className="flex h-[102px] shrink-0 overflow-hidden border-y-2 border-[#8c4540] bg-[linear-gradient(90deg,#4e1516_0%,#4a1415_10%,#33181a_16.500%,#3a1617_19%,#5c1615_24%,#4a1515_27%,#2f191a_31%,#6a1816_37%,#861b17_45%,#931d18_57%,#8c1c18_66%,#701916_74%,#551616_82%,#421617_91%,#3f1617_100%)] pl-[8px]">
      {LEFT.map((a) => (
        <DockApp key={a.name} app={a} />
      ))}
      <div className="ml-[18px] mr-[17.5px] mt-[12px] h-[74px] w-[2px] shrink-0 bg-[#b0524b]" />
      {RIGHT.map((a) => (
        <DockApp key={a.name} app={a} />
      ))}
    </div>
  );
}

function Desktop() {
  return (
    <div className="flex h-[193px] flex-col bg-black">
      <div className="flex h-[20px] shrink-0 overflow-hidden border-b border-[#303233] bg-linear-to-b from-[#0b0c0e] to-[#0f1112] text-[#6f7173]">
        <svg viewBox="0 0 65 20" className="h-5 w-[65px] shrink-0">
          <rect width="65" height="20" fill="#4a5a36" />
          <path d="M0 0h31q2 12-4 20H0z" fill="#4a2a22" />
          <path d="M0 0h27q2 10-3 20H0z" fill="#7a4d3c" />
          <path d="M2 9q6-3 11 1" stroke="#2a1512" strokeWidth="2.500" fill="none" />
        </svg>
        <span className="-mt-[23px] ml-[33px] w-[420px] text-[29.500px] font-medium leading-[35px]">Dhanapriya</span>
        <span className="-mt-[20px] w-[140px] text-[25px] leading-[29px] text-[#5c5e60]">12:44 pm</span>
        <div className="h-full w-px bg-[#1e2021]" />
      </div>
      <div className="flex h-[20px] shrink-0 bg-[linear-gradient(90deg,#1a0303_0%,#240404_30%,#000_34%,#280505_60%,#1b0304_100%)]">
        <div className="ml-[47px] h-[16px] w-[1661px] rounded-b-[16px] border-b-2 border-[#2c3334] bg-linear-to-b from-[#131616] to-[#151c1e]" />
      </div>
      <Dock />
      <div className="h-[10px] shrink-0 bg-[linear-gradient(90deg,#4a0a0a_0%,#5e1010_7%,#2a0505_7.500%,#6a1414_9%,#7a1715_12.300%,#000_12.600%,#000_17%,#7d1816_17.300%,#7a1815_26%,#2a0605_27%,#5a1010_27.500%,#000_28.500%,#000_32%,#a3241d_32.500%,#a0231c_60%,#7a1914_68%,#5e1210_73%,#2c0606_85%,#1c0404_100%)]" />
    </div>
  );
}

export default function App() {
  return (
    <div className="h-[1754px] w-[1754px] overflow-hidden bg-black [font-family:Inter,sans-serif]">
      <Toolbar />
      <div className="flex h-[1456px]">
        <div className="w-[1598px] shrink-0 overflow-hidden">
          <SheetTabs />
          <Sheet />
        </div>
        <Inspector />
      </div>
      <Desktop />
    </div>
  );
}
